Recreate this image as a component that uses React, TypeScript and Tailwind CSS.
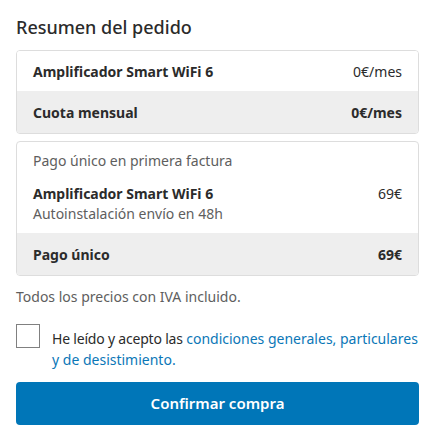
import React from "react";

export default function App() {
  return (
    <div
      className="w-[425px] h-[438px] bg-white pl-4 pr-[6px] pt-[15px] text-[#2b2b2b]"
      style={{ fontFamily: '"Noto Sans", "Open Sans", sans-serif' }}
    >
      <h2 className="text-[18px] leading-[24px] font-medium text-[#2b2b2b]">Resumen del pedido</h2>

      <div className="mt-[11px] border border-[#dddddd] rounded-[4px] overflow-hidden">
        <div className="h-10 px-4 flex items-center justify-between text-[14px] bg-white">
          <span className="font-bold">Amplificador Smart WiFi 6</span>
          <span>0€/mes</span>
        </div>
        <div className="h-[42px] px-4 flex items-center justify-between text-[14px] bg-[#eeeeee] font-bold">
          <span>Cuota mensual</span>
          <span>0€/mes</span>
        </div>
      </div>

      <div className="mt-[7px] border border-[#dddddd] rounded-[4px] overflow-hidden">
        <div className="px-4 pt-[9px] pb-[9px] text-[14px] leading-[20px]">
          <div className="text-[#5e5e5e]">Pago único en primera factura</div>
          <div className="mt-[13px] flex justify-between">
            <span className="font-bold">Amplificador Smart WiFi 6</span>
            <span>69€</span>
          </div>
          <div className="text-[#5e5e5e]">Autoinstalación envío en 48h</div>
        </div>
        <div className="h-[42px] px-4 flex items-center justify-between text-[14px] bg-[#eeeeee] font-bold">
          <span>Pago único</span>
          <span>69€</span>
        </div>
      </div>

      <p className="mt-[11px] text-[14px] leading-[20px] text-[#5e5e5e]">Todos los precios con IVA incluido.</p>

      <div className="mt-[17px] flex items-start gap-3">
        <div className="w-6 h-6 shrink-0 border-[1.5px] border-[#808080] bg-white" />
        <p className="text-[14px] leading-[21px] pt-[4px] tracking-[-0.2px]">
          He leído y acepto las{" "}
          <span className="text-[#0b77b7] tracking-normal">condiciones generales, particulares y de desistimiento.</span>
        </p>
      </div>

      <button className="mt-[12px] w-full h-[43px] rounded-[4px] bg-[#0076b8] text-white text-[15px] font-semibold">
        Confirmar compra
      </button>
    </div>
  );
}
